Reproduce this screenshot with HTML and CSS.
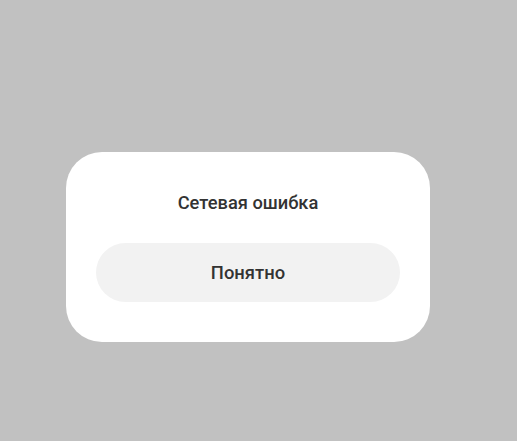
FILE: index.html
```html
<!DOCTYPE html>
<html lang="ru">

<head>
  <meta charset="UTF-8">
  <meta name="viewport" content="width=device-width, initial-scale=1.0">
  <title>Сетевая ошибка</title>
  <link rel="stylesheet" href="styles.css">
</head>

<body>
  <!-- Error dialog -->
  <div class="dialog">
    <p class="dialog-title">Сетевая ошибка</p>
    <button class="ok-btn" type="button">Понятно</button>
  </div>
</body>

</html>
```

FILE: styles.css
```css
* {
  margin: 0;
  padding: 0;
  box-sizing: border-box;
  font-family: 'Roboto', 'Noto Sans', sans-serif;
}

body {
  min-height: 100vh;
  background-color: #c1c1c1;
  display: flex;
  justify-content: center;
  padding-top: 152px;
  padding-right: 21px;
}

.dialog {
  width: 364px;
  height: 190px;
  background-color: #fff;
  border-radius: 36px;
  padding: 38px 30px 40px;
  display: flex;
  flex-direction: column;
  align-items: center;
}

.dialog-title {
  font-size: 18.3px;
  font-weight: 500;
  line-height: 26px;
  color: #333;
  margin-bottom: 27px;
}

.ok-btn {
  width: 100%;
  height: 59px;
  border: none;
  border-radius: 30px;
  background-color: #f2f2f2;
  color: #333;
  font-size: 18.4px;
  font-weight: 500;
  cursor: pointer;
}
```
